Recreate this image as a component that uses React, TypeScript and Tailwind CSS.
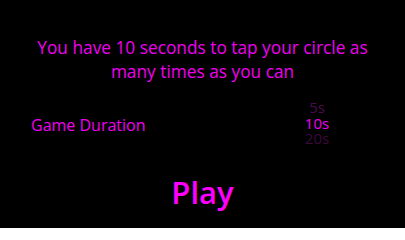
import React from "react";

export default function App() {
  const font = { fontFamily: "'Open Sans', 'Noto Sans', sans-serif" };
  return (
    <div className="w-[405px] h-[228px] bg-black flex flex-col overflow-hidden" style={font}>
      <p className="mt-[36px] mx-auto w-[345px] text-center text-[17.3px] leading-[24px] text-[#f000f0]">
        You have 10 seconds to tap your circle as many times as you can
      </p>
      <div className="mt-[16px] flex items-center">
        <div className="pl-[31px] text-[16px] leading-[20px] text-[#f000f0]">Game Duration</div>
        <div className="ml-auto mr-[58px] w-[60px] h-[50px] overflow-hidden flex flex-col items-center text-[15px] leading-[15.5px]">
          <div className="text-[#4e0a4e]">5s</div>
          <div className="text-[#f000f0]">10s</div>
          <div className="text-[#3e083e]">20s</div>
          <div className="text-[#2a052a]">30s</div>
        </div>
      </div>
      <div className="mt-auto mb-[18px] mx-auto text-[31px] leading-[36px] font-semibold text-[#ff00ff]">
        Play
      </div>
    </div>
  );
}
